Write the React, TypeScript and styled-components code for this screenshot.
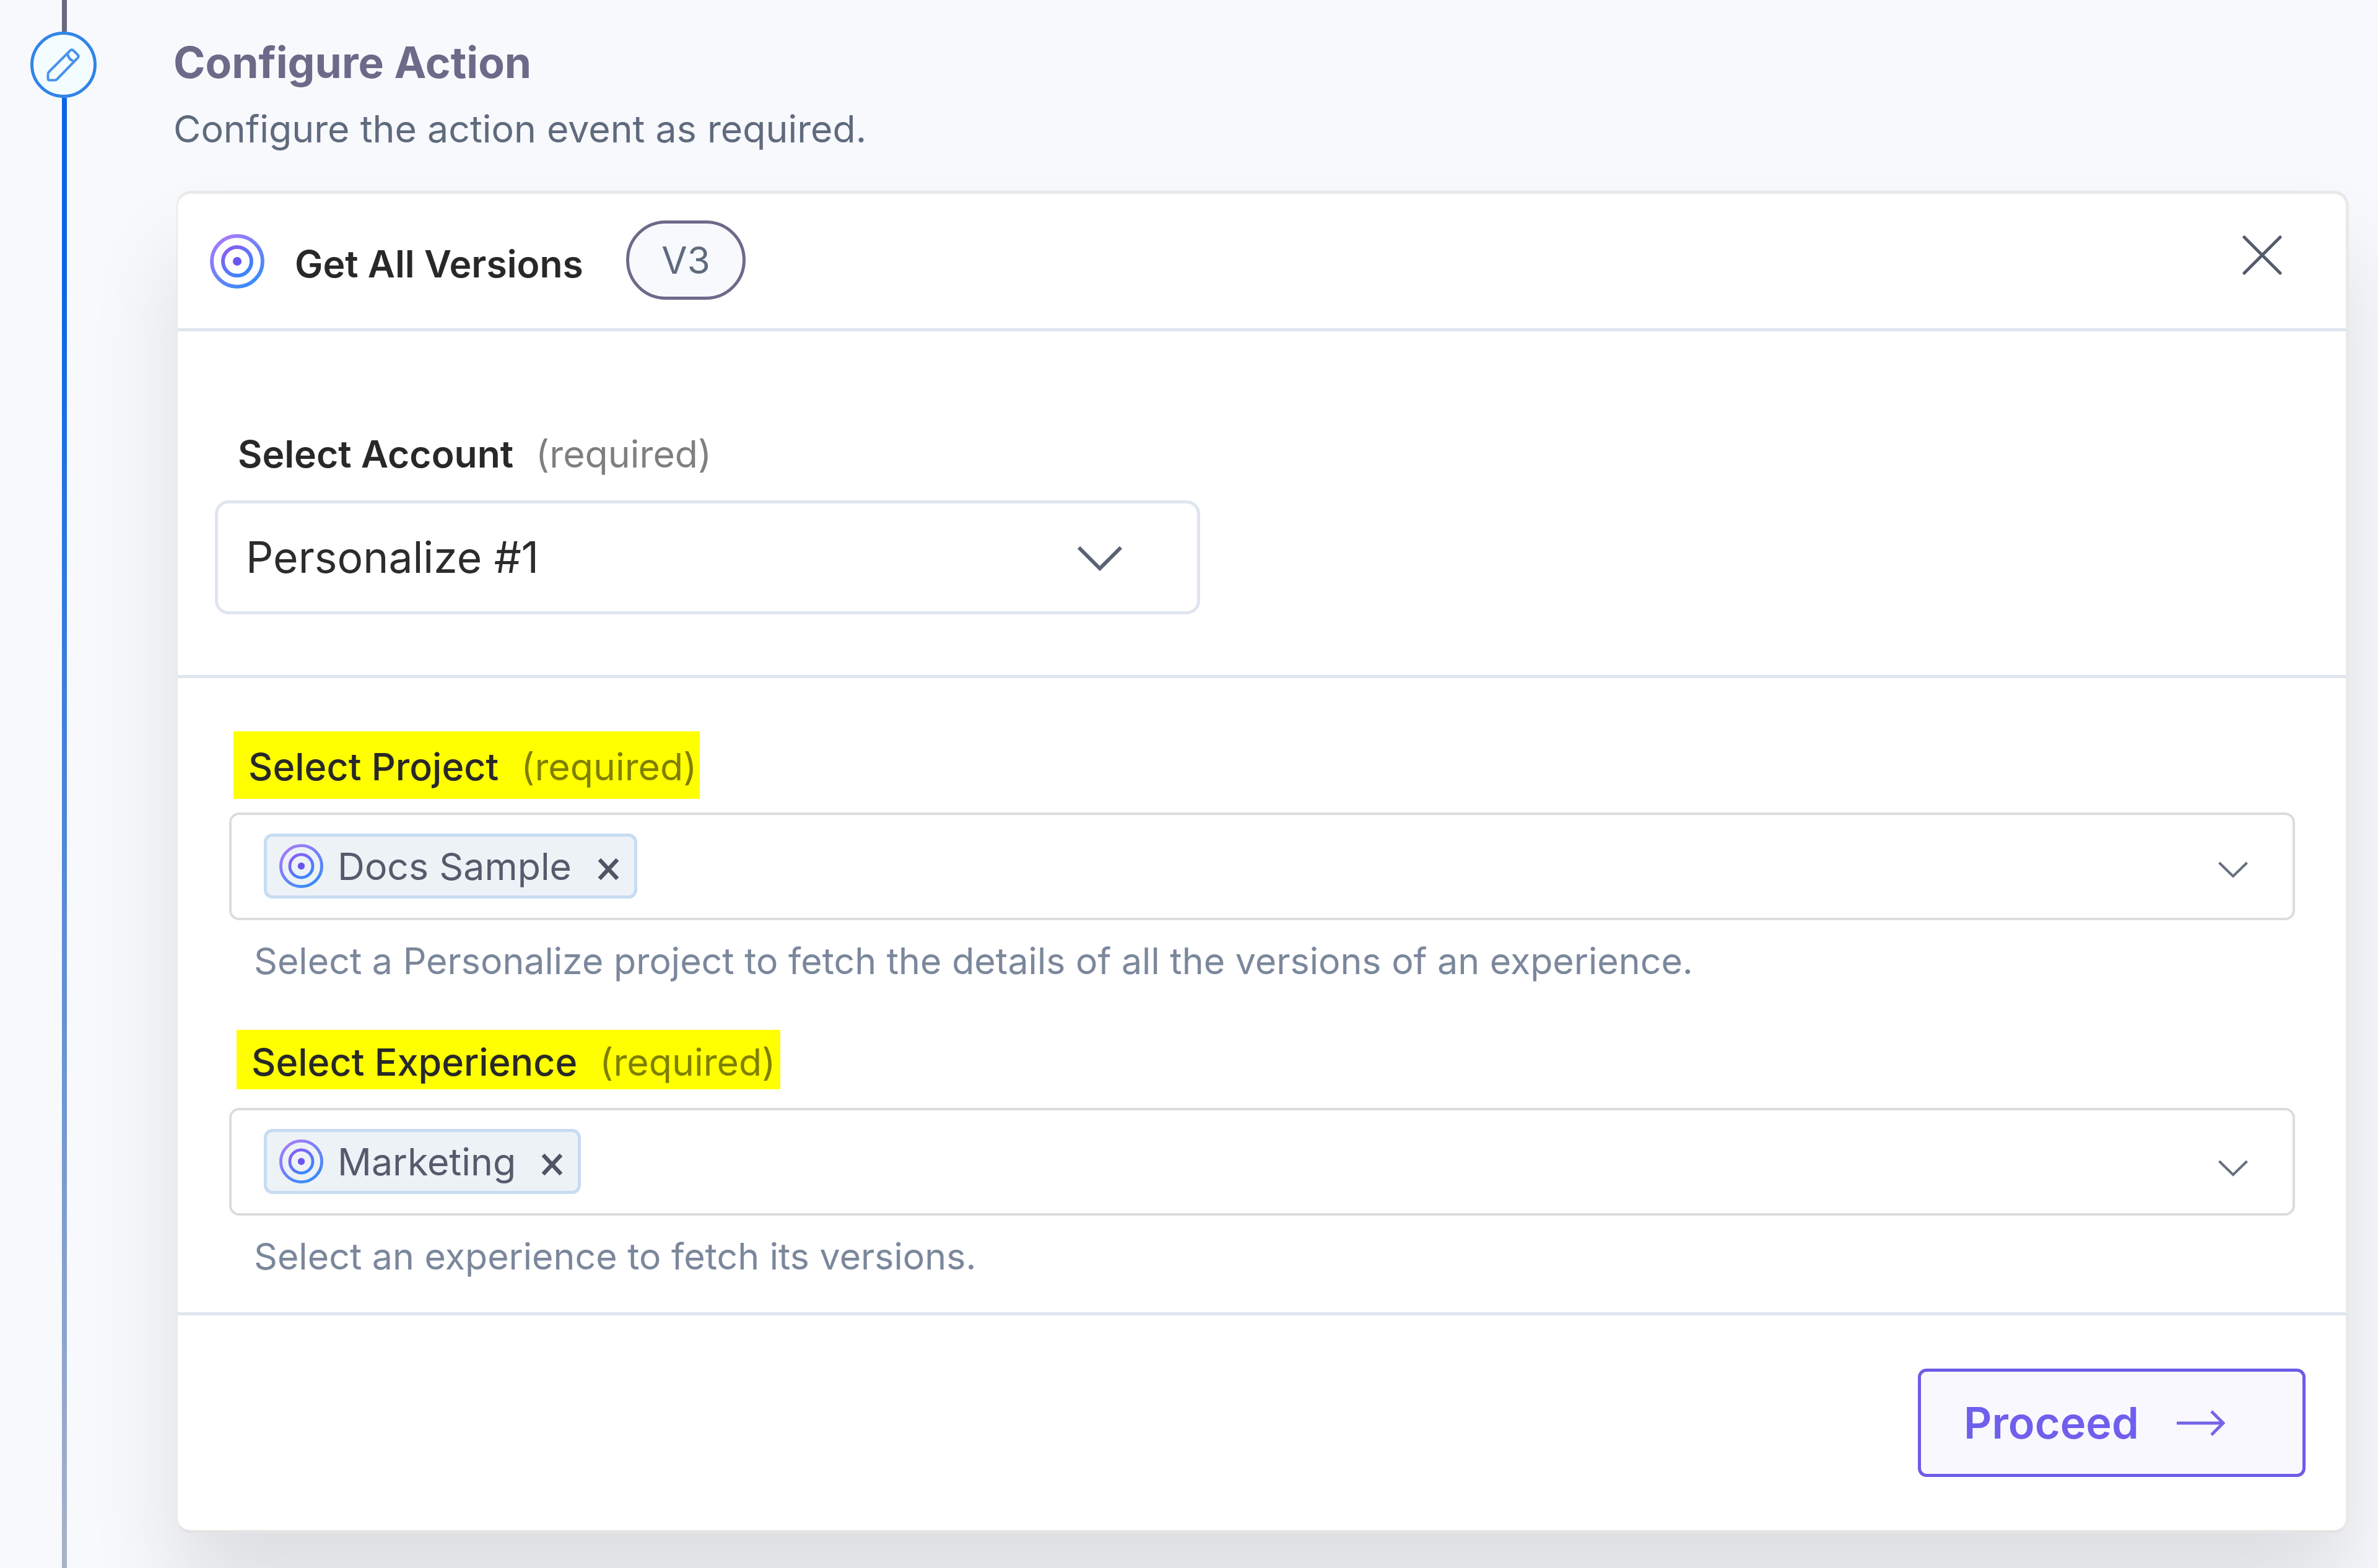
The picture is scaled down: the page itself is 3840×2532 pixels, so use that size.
import React from 'react'
import styled, { createGlobalStyle } from 'styled-components'

const GlobalStyle = createGlobalStyle`
  * {
    box-sizing: border-box;
  }
  body {
    margin: 0;
    background: #f8f9fd;
    font-family: Inter, 'Liberation Sans', sans-serif;
    overflow: hidden;
  }
  svg {
    display: block;
    flex: none;
  }
`

const Page = styled.main`
  display: flex;
  width: 3840px;
  height: 2532px;
  overflow: hidden;
`

const Rail = styled.div`
  display: flex;
  flex-direction: column;
  align-items: center;
  width: 208px;
  flex: none;
`

const RailTop = styled.div`
  width: 8px;
  height: 51px;
  background: #666a7c;
`

const RailLine = styled.div`
  width: 8px;
  flex: 1;
  background: linear-gradient(#0a66e4 0%, #0a66e4 12%, #a9b2c8 100%);
`

const StepDot = styled.div`
  display: flex;
  align-items: center;
  justify-content: center;
  width: 107px;
  height: 107px;
  margin-left: -4px;
  border: 5px solid #3184e8;
  border-radius: 50%;
  background: #f3fcff;
`

const Step = styled.section`
  display: flex;
  flex-direction: column;
  width: 3508px;
  margin-left: 77px;
  flex: none;
`

const StepTitle = styled.h2`
  margin: 61px 0 0 -5px;
  font-size: 69.6px;
  font-weight: 700;
  line-height: 80px;
  color: #6d6a89;
`

const StepText = styled.p`
  margin: 29px 0 62px -5px;
  font-size: 60.8px;
  line-height: 76px;
  color: #5f6b7d;
`

const Card = styled.div`
  height: 2168px;
  border: 5px solid #e9e9ea;
  border-left-width: 2px;
  border-bottom-color: #e4e4e5;
  border-radius: 24px;
  background: #fff;
  box-shadow: 0 98px 148px rgba(0, 0, 0, 0.11);
`

const CardHeader = styled.header`
  display: flex;
  align-items: flex-start;
  height: 222px;
  padding: 0 103px 0 52px;
  border-bottom: 5px solid #dfe5ef;
`

const HeaderIcon = styled.div`
  margin-top: 65px;
`

const ActionName = styled.h3`
  margin: 75px 0 0 49px;
  width: 535px;
  font-size: 60.6px;
  font-weight: 600;
  line-height: 76px;
  color: #282828;
`

const Version = styled.span`
  display: flex;
  align-items: center;
  justify-content: center;
  width: 193px;
  height: 128px;
  margin-top: 43px;
  border: 5px solid #6d6a89;
  border-radius: 64px;
  background: #f8f9fd;
  font-size: 60px;
  color: #5f6b7d;
`

const CloseButton = styled.button`
  margin: 67px 0 0 auto;
  padding: 0;
  border: 0;
  background: none;
`

const AccountSection = styled.section`
  height: 560px;
  padding: 160px 0 0 60px;
  border-bottom: 5px solid #dfe5ef;
`

const AccountLabel = styled.div`
  padding-left: 37px;
  margin-bottom: 37px;
`

const Label = styled.label<{ $weight?: number }>`
  font-size: ${(p) => (p.$weight ? 61 : 60.6)}px;
  font-weight: ${(p) => p.$weight || 600};
  line-height: 76px;
  color: #282828;
`

const Required = styled.span`
  margin-left: 36px;
  font-size: 60.8px;
  font-weight: 400;
  line-height: 76px;
  color: rgba(0, 0, 0, 0.5);
`

const AccountSelect = styled.div`
  display: flex;
  align-items: center;
  justify-content: space-between;
  width: 1591px;
  height: 184px;
  padding: 0 121px 0 45px;
  border: 5px solid #dfe5ef;
  border-radius: 22px;
  font-size: 69.6px;
  color: #2c2c2c;

  svg {
    margin-top: 4px;
  }
`

const FieldsSection = styled.section`
  height: 1029px;
  padding: 86px 82px 0 83px;
  border-bottom: 5px solid #dfe5ef;
`

const Field = styled.div`
  height: 482px;
`

const Highlight = styled.div<{ $width: number; $height: number; $indent: number; $drop: number }>`
  display: flex;
  align-items: center;
  width: ${(p) => p.$width}px;
  height: ${(p) => p.$height}px;
  margin-left: ${(p) => p.$indent}px;
  padding: ${(p) => p.$drop}px 0 0 24px;
  background: #ff0;
  white-space: nowrap;
`

const MultiSelect = styled.div<{ $gap: number; $chevronTop: number }>`
  display: flex;
  align-items: flex-start;
  justify-content: space-between;
  height: 174px;
  margin-top: ${(p) => p.$gap}px;
  padding: 30px 72px 0 52px;
  border: 4px solid #dcdcdc;
  border-radius: 16px;

  > svg {
    margin-top: ${(p) => p.$chevronTop}px;
  }
`

const Chip = styled.div<{ $width: number }>`
  display: flex;
  align-items: center;
  width: ${(p) => p.$width}px;
  height: 105px;
  padding: 0 24px 0 20px;
  border: 5px solid #c7dcf2;
  border-radius: 14px;
  background: #edf2f7;
  font-size: 60.8px;
  color: #555b6b;

  svg:last-child {
    margin-top: 10px;
  }
`

const ChipText = styled.span`
  flex: 1;
  margin-left: 23px;
  white-space: nowrap;
`

const Help = styled.p`
  margin: 28px 0 0 40px;
  font-size: 59.1px;
  line-height: 76px;
  color: #7b879b;
`

const CardFooter = styled.footer`
  display: flex;
  justify-content: flex-end;
  padding: 86px 65px 0 0;
`

const ProceedButton = styled.button`
  display: flex;
  align-items: center;
  width: 626px;
  height: 175px;
  padding: 0 0 0 69px;
  border: 5px solid #6c5ce7;
  border-radius: 14px;
  background: #f9f8ff;
  font-family: inherit;
  font-size: 70.4px;
  font-weight: 600;
  color: #6f5fec;

  svg {
    margin-left: 61px;
  }
`

const PersonalizeIcon = ({ size, id }: { size: number; id: string }) => (
  <svg width={size} height={size} viewBox="0 0 88 88" fill="none">
    <defs>
      <linearGradient id={id} x1="20" y1="8" x2="68" y2="80" gradientUnits="userSpaceOnUse">
        <stop stopColor="#a17bfa" />
        <stop offset="1" stopColor="#3b8bf8" />
      </linearGradient>
      <linearGradient id={`${id}-inner`} x1="30" y1="24" x2="56" y2="64" gradientUnits="userSpaceOnUse">
        <stop stopColor="#8560f6" />
        <stop offset="1" stopColor="#3b86fb" />
      </linearGradient>
    </defs>
    <circle cx="44" cy="44" r="41" stroke={`url(#${id})`} strokeWidth="6" />
    <circle cx="44" cy="44" r="23" stroke={`url(#${id}-inner)`} strokeWidth="6" />
    <circle cx="44" cy="44" r="7" fill="#6a55ee" />
  </svg>
)

const PencilIcon = () => (
  <svg width="54" height="54" viewBox="0 0 54 54" fill="none" stroke="#4a92ec" strokeWidth="4" strokeLinejoin="round">
    <path d="M38.5 3.5Q41 1.2 43.5 3.5L50.5 10.5Q53 13 50.5 15.5L17.5 49.5Q16 51.5 13 51.5H5Q2.5 51.5 2.5 49V42Q2.5 39.5 5 37Z" />
    <path d="M34 9Q36 19 45 21" />
  </svg>
)

const CloseIcon = () => (
  <svg width="64" height="64" viewBox="0 0 64 64" stroke="#545c6b" strokeWidth="5" strokeLinecap="round">
    <path d="M3 3 61 61M61 3 3 61" />
  </svg>
)

const ChevronLarge = () => (
  <svg width="72" height="42" viewBox="0 0 72 42" fill="none" stroke="#5a6274" strokeWidth="6">
    <path d="M2 3 36 37 70 3" />
  </svg>
)

const ChevronSmall = () => (
  <svg width="48" height="28" viewBox="0 0 48 28" fill="none" stroke="#66707f" strokeWidth="4">
    <path d="M1.5 2 24 24 46.5 2" />
  </svg>
)

const RemoveIcon = () => (
  <svg width="35" height="35" viewBox="0 0 35 35" stroke="#4f5564" strokeWidth="6.5">
    <path d="M3 2 32 33M32 2 3 33" />
  </svg>
)

const ArrowIcon = () => (
  <svg width="78" height="42" viewBox="0 0 78 42" fill="none" stroke="#7565e8" strokeWidth="5">
    <path d="M0 21H75M56 2 75 21 56 40" />
  </svg>
)

const App = () => (
  <React.Fragment>
    <GlobalStyle />
    <Page>
      <Rail>
        <RailTop />
        <StepDot>
          <PencilIcon />
        </StepDot>
        <RailLine />
      </Rail>
      <Step>
        <StepTitle>Configure Action</StepTitle>
        <StepText>Configure the action event as required.</StepText>
        <Card>
          <CardHeader>
            <HeaderIcon>
              <PersonalizeIcon size={88} id="header" />
            </HeaderIcon>
            <ActionName>Get All Versions</ActionName>
            <Version>V3</Version>
            <CloseButton aria-label="Close">
              <CloseIcon />
            </CloseButton>
          </CardHeader>

          <AccountSection>
            <AccountLabel>
              <Label>Select Account</Label>
              <Required>(required)</Required>
            </AccountLabel>
            <AccountSelect>
              Personalize #1
              <ChevronLarge />
            </AccountSelect>
          </AccountSection>

          <FieldsSection>
            <Field>
              <Highlight $width={753} $height={109} $indent={7} $drop={4}>
                <Label $weight={500}>Select Project</Label>
                <Required>(required)</Required>
              </Highlight>
              <MultiSelect $gap={22} $chevronTop={45}>
                <Chip $width={603}>
                  <PersonalizeIcon size={71} id="project" />
                  <ChipText>Docs Sample</ChipText>
                  <RemoveIcon />
                </Chip>
                <ChevronSmall />
              </MultiSelect>
              <Help>Select a Personalize project to fetch the details of all the versions of an experience.</Help>
            </Field>
            <Field>
              <Highlight $width={878} $height={96} $indent={12} $drop={8}>
                <Label $weight={500}>Select Experience</Label>
                <Required>(required)</Required>
              </Highlight>
              <MultiSelect $gap={30} $chevronTop={50}>
                <Chip $width={512}>
                  <PersonalizeIcon size={71} id="experience" />
                  <ChipText>Marketing</ChipText>
                  <RemoveIcon />
                </Chip>
                <ChevronSmall />
              </MultiSelect>
              <Help>Select an experience to fetch its versions.</Help>
            </Field>
          </FieldsSection>

          <CardFooter>
            <ProceedButton>
              Proceed
              <ArrowIcon />
            </ProceedButton>
          </CardFooter>
        </Card>
      </Step>
    </Page>
  </React.Fragment>
)

export default App
